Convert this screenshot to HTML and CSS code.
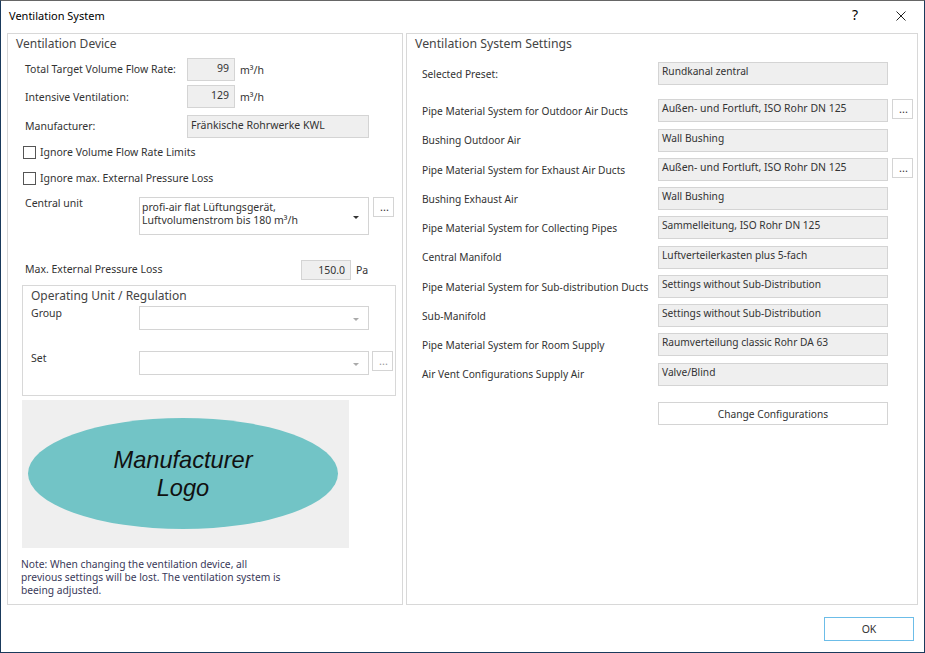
FILE: index.html
```html
<!DOCTYPE html>
<html lang="en">
<head>
    <meta charset="UTF-8">
    <title>Ventilation System</title>
    <link rel="stylesheet" href="styles.css">
</head>
<body>
    <div class="window">
        <div class="titlebar">
            <div class="title">Ventilation System</div>
            <div class="help">?</div>
            <svg class="close" width="12" height="12" viewBox="0 0 12 12"><path d="M1.5 1.5L10.5 10.5M10.5 1.5L1.5 10.5" stroke="#222" stroke-width="1" fill="none"/></svg>
        </div>
        <div class="panels">
            <div class="panel left">
                <div class="heading">Ventilation Device</div>
                <div class="row r-flow">
                    <div class="lbl">Total Target Volume Flow Rate:</div>
                    <div class="field num">99</div>
                    <div class="unit">m³/h</div>
                </div>
                <div class="row r-int">
                    <div class="lbl">Intensive Ventilation:</div>
                    <div class="field num">129</div>
                    <div class="unit">m³/h</div>
                </div>
                <div class="row r-man">
                    <div class="lbl">Manufacturer:</div>
                    <div class="field wide">Fränkische Rohrwerke KWL</div>
                </div>
                <div class="check c1"><span class="box"></span>Ignore Volume Flow Rate Limits</div>
                <div class="check c2"><span class="box"></span>Ignore max. External Pressure Loss</div>
                <div class="row r-unit">
                    <div class="lbl2">Central unit</div>
                    <div class="combo tall">profi-air flat Lüftungsgerät,<br>Luftvolumenstrom bis 180 m³/h<span class="arrow"></span></div>
                    <div class="dots">...</div>
                </div>
                <div class="row r-max">
                    <div class="lbl3">Max. External Pressure Loss</div>
                    <div class="field pa">150.0</div>
                    <div class="unit">Pa</div>
                </div>
                <div class="group">
                    <div class="group-title">Operating Unit / Regulation</div>
                    <div class="grow g1">
                        <div class="glbl">Group</div>
                        <div class="combo"><span class="arrow off"></span></div>
                    </div>
                    <div class="grow g2">
                        <div class="glbl">Set</div>
                        <div class="combo"><span class="arrow off"></span></div>
                        <div class="dots off">...</div>
                    </div>
                </div>
                <div class="logo">
                    <div class="ellipse">Manufacturer<br>Logo</div>
                </div>
                <div class="note">Note: When changing the ventilation device, all<br>previous settings will be lost. The ventilation system is<br>beeing adjusted.</div>
            </div>
            <div class="panel right">
                <div class="heading">Ventilation System Settings</div>
                <div class="settings">
                    <div class="srow s0"><div class="slbl">Selected Preset:</div><div class="field sval">Rundkanal zentral</div></div>
                    <div class="srow s1"><div class="slbl">Pipe Material System for Outdoor Air Ducts</div><div class="field sval long">Außen- und Fortluft, ISO Rohr DN 125</div><div class="dots">...</div></div>
                    <div class="srow s2"><div class="slbl">Bushing Outdoor Air</div><div class="field sval">Wall Bushing</div></div>
                    <div class="srow s3"><div class="slbl">Pipe Material System for Exhaust Air Ducts</div><div class="field sval long">Außen- und Fortluft, ISO Rohr DN 125</div><div class="dots">...</div></div>
                    <div class="srow s3"><div class="slbl">Bushing Exhaust Air</div><div class="field sval">Wall Bushing</div></div>
                    <div class="srow s3"><div class="slbl">Pipe Material System for Collecting Pipes</div><div class="field sval">Sammelleitung, ISO Rohr DN 125</div></div>
                    <div class="srow s2"><div class="slbl">Central Manifold</div><div class="field sval">Luftverteilerkasten plus 5-fach</div></div>
                    <div class="srow s3"><div class="slbl">Pipe Material System for Sub-distribution Ducts</div><div class="field sval">Settings without Sub-Distribution</div></div>
                    <div class="srow s3"><div class="slbl">Sub-Manifold</div><div class="field sval">Settings without Sub-Distribution</div></div>
                    <div class="srow s3"><div class="slbl">Pipe Material System for Room Supply</div><div class="field sval">Raumverteilung classic Rohr DA 63</div></div>
                    <div class="srow s2"><div class="slbl">Air Vent Configurations Supply Air</div><div class="field sval">Valve/Blind</div></div>
                </div>
                <div class="change">Change Configurations</div>
            </div>
        </div>
        <div class="footer">
            <div class="ok">OK</div>
        </div>
    </div>
</body>
</html>
```

FILE: styles.css
```css
* {
    box-sizing: border-box;
}

html, body {
    margin: 0;
    height: 100%;
}

body {
    font-family: "Noto Sans", sans-serif;
    font-size: 10.5px;
    color: #333;
    background-color: #fff;
}

.window {
    width: 925px;
    height: 653px;
    border: 1px solid #1a3a5c;
    border-top-color: #666;
    display: flex;
    flex-direction: column;
    background-color: #fff;
}

.titlebar {
    height: 32px;
    flex: none;
    display: flex;
    align-items: center;
    padding-left: 8px;
    color: #000;
}

.title {
    flex: 1;
    font-size: 11px;
    padding-bottom: 4px;
}

.help {
    font-size: 14px;
    margin-right: 37px;
    padding-bottom: 6px;
}

.close {
    margin-right: 17px;
    margin-bottom: 2px;
}

.panels {
    display: flex;
    gap: 3px;
    padding-left: 6px;
    height: 572px;
    flex: none;
}

.panel {
    border: 1px solid #d8d8d8;
    height: 572px;
    display: flex;
    flex-direction: column;
}

.left {
    width: 396px;
    padding-left: 14px;
}

.right {
    width: 512px;
    padding-left: 8px;
}

.heading {
    font-size: 12px;
    height: 18px;
    line-height: 18px;
    margin-top: 1px;
    color: #444;
}

.left .heading {
    margin-left: -6px;
}

.right .heading {
    font-size: 12.3px;
}

.row {
    display: flex;
    align-items: center;
}

.lbl {
    width: 161px;
    margin-left: 3px;
    margin-right: 1px;
    padding-bottom: 2px;
}

.r-int .lbl {
    padding-bottom: 0;
}

.field {
    background-color: #efefef;
    border: 1px solid #d4d4d4;
}

.num {
    width: 48px;
    height: 23px;
    text-align: right;
    padding-right: 5px;
    line-height: 19px;
}

.unit {
    margin-left: 5px;
}

.wide {
    width: 182px;
    height: 23px;
    padding-left: 3px;
    line-height: 19px;
}

.r-flow {
    margin-top: 5px;
}

.r-int {
    margin-top: 4px;
}

.r-man {
    margin-top: 7px;
}

.check {
    display: flex;
    align-items: center;
    color: #333;
    height: 14px;
    margin-left: 1px;
}

.c1 {
    margin-top: 7px;
}

.c2 {
    margin-top: 12px;
}

.box {
    width: 13px;
    height: 13px;
    border: 1px solid #555;
    margin-right: 4px;
}

.r-unit {
    align-items: flex-start;
    margin-top: 12px;
}

.lbl2 {
    width: 114px;
    margin-left: 3px;
    line-height: 12px;
}

.combo {
    position: relative;
    width: 230px;
    height: 24px;
    border: 1px solid #d4d4d4;
    background-color: #fff;
}

.tall {
    height: 38px;
    padding: 3px 2px;
    line-height: 13px;
}

.arrow {
    position: absolute;
    right: 9px;
    top: 18px;
    width: 0;
    height: 0;
    border-left: 3px solid transparent;
    border-right: 3px solid transparent;
    border-top: 3px solid #333;
}

.arrow.off {
    top: 11px;
    border-top-color: #aaa;
}

.dots {
    width: 21px;
    height: 20px;
    margin-left: 4px;
    padding-left: 6px;
    border: 1px solid #d4d4d4;
    line-height: 17px;
    font-size: 11px;
    background-color: #fff;
}

.dots.off {
    margin-left: 3px;
    color: #999;
}

.r-max {
    margin-top: 25px;
}

.lbl3 {
    width: 275px;
    margin-left: 3px;
    margin-right: 1px;
    padding-bottom: 2px;
}

.pa {
    width: 50px;
    height: 20px;
    text-align: right;
    padding-right: 5px;
    line-height: 18px;
}

.group {
    width: 374px;
    height: 111px;
    margin-top: 5px;
    border: 1px solid #d8d8d8;
    padding-left: 8px;
    color: #333;
    flex: none;
}

.group-title {
    font-size: 12px;
    height: 20px;
    line-height: 19px;
    color: #444;
}

.grow {
    display: flex;
    align-items: flex-start;
}

.g2 {
    margin-top: 21px;
}

.glbl {
    width: 108px;
    line-height: 14px;
}

.logo {
    width: 327px;
    height: 148px;
    margin-top: 4px;
    padding-left: 6px;
    padding-bottom: 2px;
    background-color: #efefef;
    display: flex;
    align-items: center;
    flex: none;
}

.ellipse {
    width: 310px;
    height: 111px;
    border-radius: 50%;
    background-color: #72c4c6;
    font-family: "Liberation Sans", sans-serif;
    font-size: 23.6px;
    font-style: italic;
    line-height: 28px;
    color: #111;
    text-align: center;
    padding-top: 28px;
}

.note {
    margin-top: 10px;
    margin-left: -1px;
    line-height: 13px;
    font-size: 10.25px;
    color: #3a3a5a;
}

.settings {
    display: flex;
    flex-direction: column;
    margin-top: 9px;
}

.srow {
    display: flex;
    align-items: center;
    height: 23px;
}

.s1 {
    margin-top: 14px;
}

.s2 {
    margin-top: 7px;
}

.s3 {
    margin-top: 6px;
}

.slbl {
    width: 236px;
    margin-left: 7px;
    font-size: 10.2px;
    white-space: nowrap;
}

.s2 .slbl {
    padding-bottom: 2px;
}

.sval {
    width: 230px;
    height: 23px;
    padding-left: 3px;
    font-size: 10.2px;
    line-height: 17px;
    white-space: nowrap;
}

.sval.long {
    font-size: 10.45px;
}

.srow .dots {
    align-self: flex-start;
}

.change {
    width: 230px;
    height: 23px;
    margin-top: 16px;
    margin-left: 243px;
    border: 1px solid #d4d4d4;
    font-size: 10.2px;
    text-align: center;
    line-height: 22px;
}

.footer {
    flex: 1;
    display: flex;
    justify-content: flex-end;
    align-items: flex-start;
    padding-top: 12px;
    padding-right: 10px;
}

.ok {
    width: 90px;
    height: 24px;
    border: 1px solid #6cbde8;
    text-align: center;
    line-height: 22px;
    font-size: 10.5px;
}
```
